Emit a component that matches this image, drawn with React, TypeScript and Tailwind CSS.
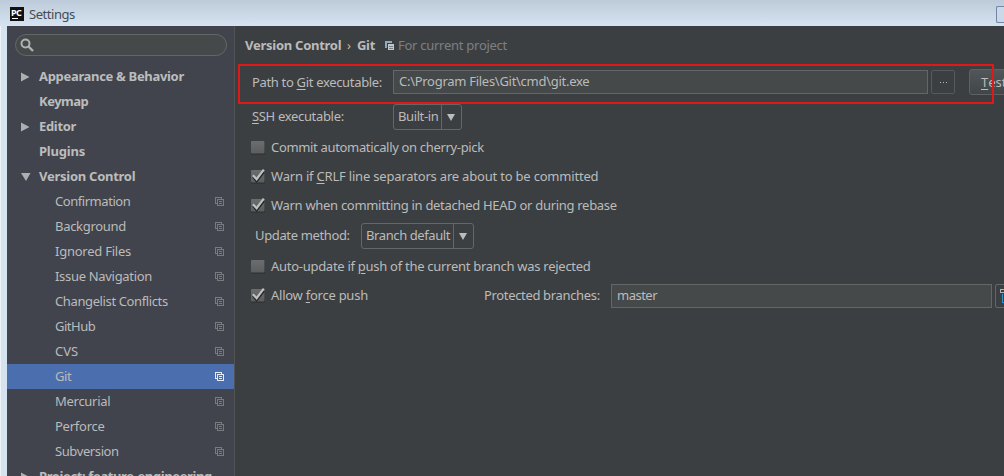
import type { ReactNode } from "react";

function CopyIcon({ className }: { className: string }) {
  return (
    <svg width="9" height="9" viewBox="0 0 9 9" fill="none" stroke="currentColor" className={className} shapeRendering="crispEdges">
      <path d="M2 6.5H.5V.5H6.5V2" />
      <path d="M2.5 2.5H8.5V8.5H2.5ZM4 4.5H7M4 6.5H7" />
    </svg>
  );
}

function Arrow({ open }: { open?: boolean }) {
  return (
    <svg width="10" height="10" viewBox="0 0 10 10" className="fill-[#adafb0]">
      <path d={open ? "M0 1H9.5L5 9Z" : "M0 .5L8.5 5L0 9.5Z"} />
    </svg>
  );
}

function Group({ label, state, spacing }: { label: string; state?: "open" | "closed"; spacing: string }) {
  return (
    <div className="flex h-[25px] shrink-0 items-center pl-[14px] font-bold text-[#bbbdbd]">
      <span className="flex w-[18px] shrink-0">{state && <Arrow open={state === "open"} />}</span>
      <span className={`mb-[2px] ${spacing}`}>{label}</span>
    </div>
  );
}

function Item({ label, selected, spacing }: { label: string; selected?: boolean; spacing: string }) {
  return (
    <div className={`flex h-[25px] shrink-0 items-center justify-between pl-12 pr-[10px] ${selected ? "bg-[#4b6eaf]" : ""}`}>
      <span className={`mb-[2px] ${spacing}`}>{label}</span>
      <CopyIcon className={selected ? "text-[#e4e9f2]" : "text-[#777a7e]"} />
    </div>
  );
}

function Check({ checked, children, spacing }: { checked?: boolean; children: ReactNode; spacing: string }) {
  return (
    <div className="flex h-[29px] shrink-0 items-center pl-4">
      <svg width="16" height="17" viewBox="0 0 16 17" className="mr-1 shrink-0">
        <rect x="0" y="2.5" width="14" height="13.2" rx="1" fill="#2f3233" />
        <rect x="0" y="2" width="13.5" height="12.5" rx="1" fill="url(#checkFill)" />
        {checked && (
          <>
            <path d="M2.2 8.8L5.6 13L12.8 4" fill="none" stroke="#252727" strokeWidth="2.4" />
            <path d="M1.9 7.2L5.6 11.2L12.8 1.6" fill="none" stroke="#bfc1c1" strokeWidth="2.2" />
          </>
        )}
      </svg>
      <span className={`mb-[2px] ${spacing}`}>{children}</span>
    </div>
  );
}

function Combo({ label, width, spacing }: { label: string; width: string; spacing: string }) {
  return (
    <div className={`flex h-[26px] shrink-0 items-center rounded-[3px] border border-[#646667] ${width}`}>
      <span className={`mb-[2px] min-w-0 flex-1 pl-1 ${spacing}`}>{label}</span>
      <span className="flex h-full w-5 shrink-0 items-center justify-center border-l border-[#646667] pr-px">
        <svg width="8" height="7" viewBox="0 0 8 7" className="fill-[#bbbdbd]"><path d="M0 0H8L4 7Z" /></svg>
      </span>
    </div>
  );
}

function U({ children }: { children: string }) {
  return <span className="underline decoration-1 underline-offset-2">{children}</span>;
}

const items: [string, string][] = [
  ["Confirmation", "tracking-[-0.45px]"],
  ["Background", "tracking-[-0.3px]"],
  ["Ignored Files", "tracking-[-0.24px]"],
  ["Issue Navigation", "tracking-[-0.31px]"],
  ["Changelist Conflicts", "tracking-[-0.38px]"],
  ["GitHub", "tracking-[-0.5px]"],
  ["CVS", "tracking-normal"],
  ["Git", "tracking-[-0.4px]"],
  ["Mercurial", "tracking-[-0.28px]"],
  ["Perforce", "tracking-[-0.25px]"],
  ["Subversion", "tracking-[-0.4px]"],
];

export default function App() {
  return (
    <div className="relative flex h-[476px] w-[1004px] flex-col overflow-hidden whitespace-pre bg-[#d5e3f0] font-['Noto_Sans','Open_Sans',sans-serif] text-[13px] leading-[18px] text-[#bbbbbb]">
      <svg width="0" height="0" className="absolute">
        <linearGradient id="checkFill" x2="0" y2="1"><stop stopColor="#6c6d6e" /><stop offset="1" stopColor="#5b5d5e" /></linearGradient>
      </svg>
      <header className="flex h-[26px] shrink-0 items-center bg-linear-to-b from-[#bdcad9] to-[#d6e3f1] pl-[10px] text-[#454c55]">
        <span className="mt-[2px] flex h-[14px] w-[14px] flex-col bg-[#111] pl-[1px] pt-px text-white">
          <span className="text-[9px] font-bold leading-[9px] tracking-[-0.5px]">PC</span>
          <span className="ml-px mt-px h-px w-[6px] shrink-0 bg-white" />
        </span>
        <span className="ml-[5px] mt-px tracking-[-0.45px]">Settings</span>
        <span className="ml-auto mt-[3px] h-[17px] w-2 rounded-l-[2px] border border-r-0 border-[#7486a5] bg-[#cbd8e7]" />
      </header>
      <div className="flex min-h-0 flex-1 border-l border-[#eef2f7] pl-[6px]">
        <aside className="flex w-[228px] shrink-0 flex-col overflow-hidden border-r border-[#515355] bg-[#41444d]">
          <div className="mb-[8px] ml-2 mt-2 flex h-[22px] w-[212px] shrink-0 items-center rounded-full border border-[#646768] bg-[#45494a] pl-1">
            <svg width="14" height="14" viewBox="0 0 14 14" fill="none" stroke="#b0b2b3" strokeWidth="2"><circle cx="5.5" cy="5.5" r="4" /><path d="M8.5 8.5L13 13" strokeWidth="2.4" /></svg>
          </div>
          <Group label="Appearance & Behavior" state="closed" spacing="tracking-[-0.32px]" />
          <Group label="Keymap" spacing="tracking-[-0.5px]" />
          <Group label="Editor" state="closed" spacing="tracking-[-0.33px]" />
          <Group label="Plugins" spacing="tracking-[-0.2px]" />
          <Group label="Version Control" state="open" spacing="tracking-[-0.26px]" />
          {items.map(([label, spacing]) => <Item key={label} label={label} spacing={spacing} selected={label === "Git"} />)}
          <Group label="Project: feature-engineering" state="closed" spacing="tracking-[-0.38px]" />
        </aside>
        <main className="flex min-w-0 flex-1 flex-col overflow-hidden bg-[#3c3f41]">
          <div className="mt-[10px] flex h-[19px] shrink-0 items-center pl-[10px]">
            <b className="mb-[2px] w-[97px] tracking-[-0.26px]">Version Control</b>
            <span className="mb-[2px] w-[15px] pl-[5px]">›</span>
            <b className="mb-[2px] w-[28px] tracking-[-0.3px]">Git</b>
            <svg width="10" height="10" viewBox="0 0 10 10" shapeRendering="crispEdges"><path d="M0 0H7V2H2V7H0Z" fill="#8dabb9" /><path d="M3 3H9V9H3Z" fill="#c5c8ca" /><path d="M4 5.5H8M4 7.5H8" stroke="#777c7f" /></svg>
            <span className="mb-[2px] ml-[3px] tracking-[-0.27px] text-[#7d8082]">For current project</span>
          </div>
          <div className="mt-[15px] flex h-[24px] shrink-0 items-center pl-[17px]">
            <span className="w-[141px] shrink-0 tracking-[-0.33px]">Path to <U>G</U>it executable:</span>
            <div className="flex h-[24px] w-[535px] shrink-0 items-center border border-[#646667] bg-[#45494a] pb-[2px] pl-[5px] tracking-[-0.28px]">C:\Program Files\Git\cmd\git.exe</div>
            <div className="ml-[3px] flex h-6 w-6 shrink-0 items-center justify-center gap-[2px] rounded-[2px] border border-[#57595b]"><i className="size-px bg-[#bbb]" /><i className="size-px bg-[#bbb]" /><i className="size-px bg-[#bbb]" /></div>
            <div className="ml-[14px] flex h-[26px] w-[60px] shrink-0 items-center rounded-[3px] border border-[#5f6163] bg-linear-to-b from-[#515658] to-[#414648] pb-px pl-[11px]"><U>T</U>est</div>
          </div>
          <div className="mt-[10px] flex h-[26px] shrink-0 items-center pl-[17px]">
            <span className="mb-[2px] w-[141px] tracking-[-0.33px]"><U>S</U>SH executable:</span>
            <Combo label="Built-in" width="w-[69px]" spacing="tracking-[-0.4px]" />
          </div>
          <div className="h-[3px] shrink-0" />
          <Check spacing="tracking-[-0.33px]">Commit automatically on cherry-pick</Check>
          <Check checked spacing="tracking-[-0.2px]">Warn if <U>C</U>RLF line separators are about to be committed</Check>
          <Check checked spacing="tracking-[-0.3px]">Warn when committing in detached HEAD or during rebase</Check>
          <div className="mt-[3px] flex h-[26px] shrink-0 items-center pl-[20px]">
            <span className="mb-[2px] w-[106px] tracking-[-0.36px]">Update method:</span>
            <Combo label="Branch default" width="w-[113px]" spacing="tracking-[-0.4px]" />
          </div>
          <div className="h-[3px] shrink-0" />
          <Check spacing="tracking-[-0.28px]">Auto-update if <U>p</U>ush of the current branch was rejected</Check>
          <div className="flex h-[29px] shrink-0 items-center">
            <div className="w-[249px] shrink-0"><Check checked spacing="tracking-[-0.25px]">Allow <U>f</U>orce push</Check></div>
            <span className="mb-[2px] w-[127px] shrink-0 tracking-[-0.34px]">Protected branches:</span>
            <div className="flex h-[24px] w-[381px] shrink-0 items-center border border-[#646667] bg-[#45494a] pb-[2px] pl-[5px] tracking-[-0.5px]">master</div>
            <div className="ml-[3px] h-6 w-6 shrink-0 rounded-[2px] border border-[#646667] pl-1 pt-1"><svg width="18" height="16" viewBox="0 0 18 16" fill="none" shapeRendering="crispEdges"><path d="M.5 .5H9V3.5H.5Z" stroke="#b0b2b3" /><path d="M2.5 5V13.5H9" stroke="#3592c4" /></svg></div>
          </div>
        </main>
      </div>
      <div className="pointer-events-none absolute left-[238px] top-[64px] h-[40px] w-[756px] rounded-[1px] border-2 border-[#e01818]" />
    </div>
  );
}
